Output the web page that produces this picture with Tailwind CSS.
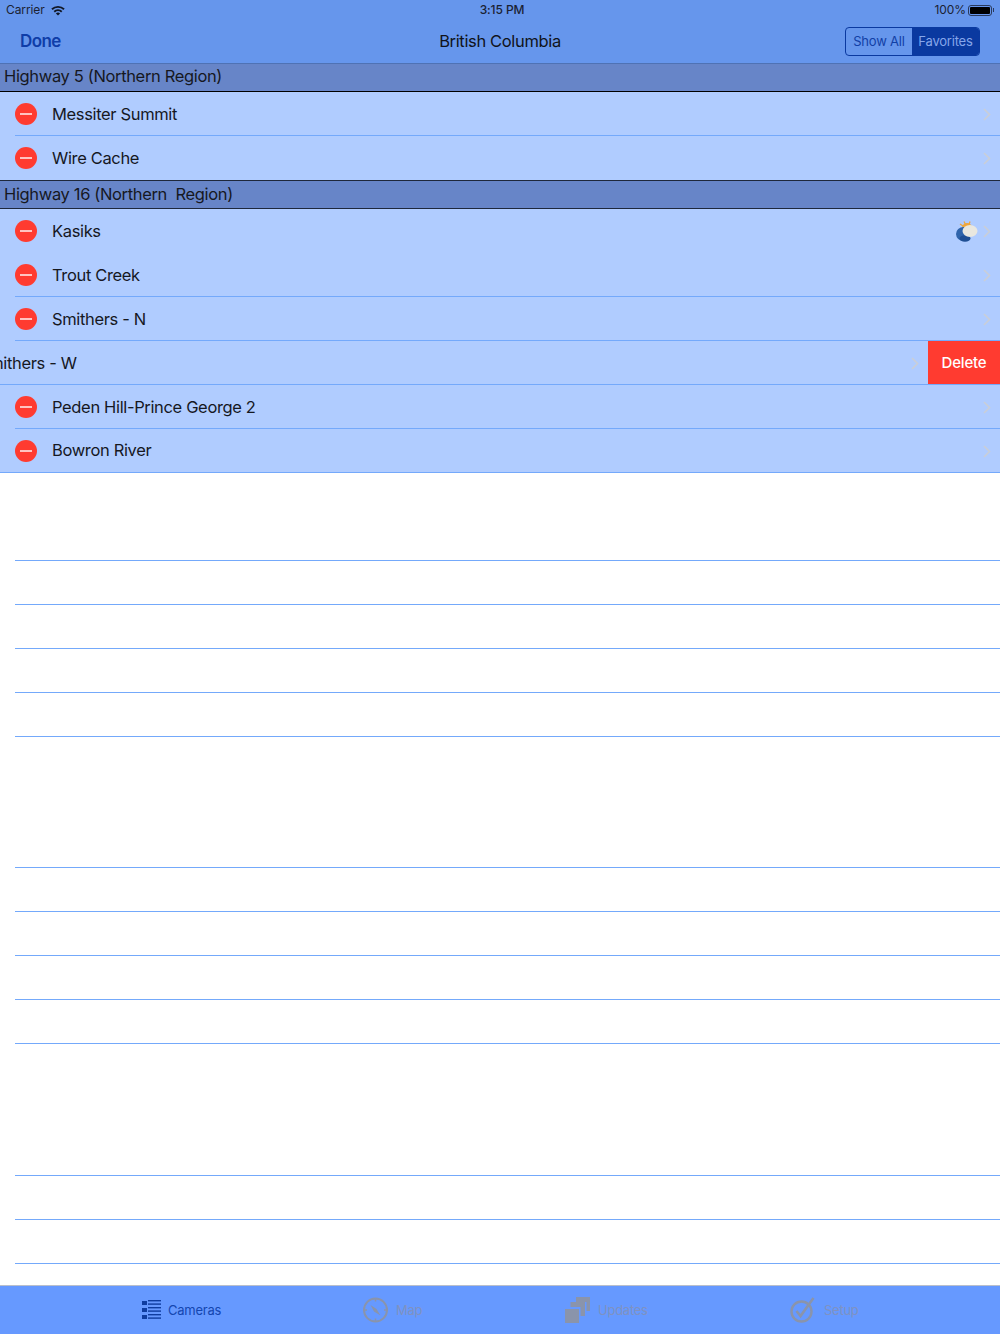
<!DOCTYPE html>
<html lang="en">
<head>
<meta charset="UTF-8">
<title>British Columbia</title>
<script src="https://cdn.jsdelivr.net/npm/@tailwindcss/browser@4"></script>
</head>
<body class="bg-white font-['Inter',sans-serif] text-[#16181f]">
<div class="relative flex h-[1334px] w-[1000px] flex-col overflow-hidden">

  <!-- status bar + nav -->
  <header class="h-[64px] shrink-0 border-b border-[#4f72b4] bg-[#6696ec]">
    <div class="flex h-[20px] items-center justify-between pl-[6px] pr-[6px] text-[12px] tracking-[-0.1px] text-[#1b2233]">
      <div class="flex w-[204px] items-center gap-[6px]">
        <span>Carrier</span>
        <svg width="14" height="11" viewBox="0 0 14 11"><path d="M0.3 3.6a9.7 9.7 0 0 1 13.4 0l-1.3 1.4a7.8 7.8 0 0 0-10.8 0zM2.6 6a6.4 6.4 0 0 1 8.8 0l-1.3 1.4a4.5 4.5 0 0 0-6.2 0zM4.9 8.4a3.1 3.1 0 0 1 4.2 0L7 10.6z" fill="#111827"/></svg>
      </div>
      <span class="font-medium">3:15 PM</span>
      <div class="flex w-[200px] items-center justify-end gap-[2px]">
        <span>100%</span>
        <div class="flex items-center">
          <div class="h-[11px] w-[24px] rounded-[3px] border border-[#2a3a5c] p-[1px]"><div class="h-full w-full rounded-[1px] bg-black"></div></div>
          <div class="ml-[1px] h-[4px] w-[1px] bg-[#2a3a5c]"></div>
        </div>
      </div>
    </div>
    <div class="flex h-[43px] items-center justify-between pl-[20px] pr-[20px]">
      <span class="w-[200px] text-[17px] font-semibold tracking-[-0.6px] text-[#0f3da8]">Done</span>
      <span class="text-[16.5px] tracking-[-0.35px] text-[#10131a]">British Columbia</span>
      <div class="flex w-[200px] justify-end">
        <div class="flex h-[29px] overflow-hidden rounded-[4px] border border-[#0a39a0] text-[13px] tracking-[-0.2px]">
          <span class="flex w-[66px] items-center justify-center text-[#123fa6]">Show All</span>
          <span class="flex w-[67px] items-center justify-center bg-[#0a39a0] text-[#86a6ea]">Favorites</span>
        </div>
      </div>
    </div>
  </header>

  <main class="flex-1 bg-white text-[16.5px] tracking-[-0.35px]">
    <div class="flex h-[28px] items-center border-b border-black bg-[#6785c8] pb-[2px] pl-[4px]">Highway 5 (Northern Region)</div>

    <div class="relative flex h-[44px] items-center bg-[#b0ccff] pl-[15px]">
      <span class="flex h-[22px] w-[22px] shrink-0 items-center justify-center rounded-full bg-[#ff3b30]"><span class="h-[2px] w-[12px] bg-[#ffc4c0]"></span></span>
      <span class="ml-[15px]">Messiter Summit</span>
      <svg class="absolute right-[9px] top-[16px]" width="8" height="13" viewBox="0 0 8 13"><path d="M1 1l5.5 5.5L1 12" fill="none" stroke="#c9ced8" stroke-width="1.7"/></svg>
      <div class="absolute bottom-0 left-[15px] right-0 h-[1px] bg-[#74a9fb]"></div>
    </div>
    <div class="relative flex h-[44px] items-center bg-[#b0ccff] pl-[15px]">
      <span class="flex h-[22px] w-[22px] shrink-0 items-center justify-center rounded-full bg-[#ff3b30]"><span class="h-[2px] w-[12px] bg-[#ffc4c0]"></span></span>
      <span class="ml-[15px]">Wire Cache</span>
      <svg class="absolute right-[9px] top-[16px]" width="8" height="13" viewBox="0 0 8 13"><path d="M1 1l5.5 5.5L1 12" fill="none" stroke="#c9ced8" stroke-width="1.7"/></svg>
    </div>

    <div class="flex h-[29px] items-center border-y border-y-black/70 bg-[#6785c8] pl-[4px]">Highway 16 (Northern&nbsp; Region)</div>

    <div class="relative flex h-[44px] items-center bg-[#b0ccff] pl-[15px]">
      <span class="flex h-[22px] w-[22px] shrink-0 items-center justify-center rounded-full bg-[#ff3b30]"><span class="h-[2px] w-[12px] bg-[#ffc4c0]"></span></span>
      <span class="ml-[15px]">Kasiks</span>
      <svg class="absolute left-[955px] top-[12px]" width="23" height="21" viewBox="0 0 23 21">
        <circle cx="12" cy="7" r="5" fill="#f0a63a"/>
        <path d="M9 .5l1.5 3M15 .5l-1 3M5 3l3 2" stroke="#f0a63a" stroke-width="1.3"/>
        <ellipse cx="8.5" cy="13" rx="7.5" ry="7" fill="#2f64ab"/>
        <ellipse cx="10" cy="17.5" rx="5.5" ry="3.2" fill="#1f4f94"/>
        <ellipse cx="15" cy="10" rx="7.5" ry="6" fill="#e9e7df"/>
      </svg>
      <svg class="absolute right-[9px] top-[16px]" width="8" height="13" viewBox="0 0 8 13"><path d="M1 1l5.5 5.5L1 12" fill="none" stroke="#c9ced8" stroke-width="1.7"/></svg>
    </div>
    <div class="relative flex h-[44px] items-center bg-[#b0ccff] pl-[15px]">
      <span class="flex h-[22px] w-[22px] shrink-0 items-center justify-center rounded-full bg-[#ff3b30]"><span class="h-[2px] w-[12px] bg-[#ffc4c0]"></span></span>
      <span class="ml-[15px]">Trout Creek</span>
      <svg class="absolute right-[9px] top-[16px]" width="8" height="13" viewBox="0 0 8 13"><path d="M1 1l5.5 5.5L1 12" fill="none" stroke="#c9ced8" stroke-width="1.7"/></svg>
      <div class="absolute bottom-0 left-[15px] right-0 h-[1px] bg-[#74a9fb]"></div>
    </div>
    <div class="relative flex h-[44px] items-center bg-[#b0ccff] pl-[15px]">
      <span class="flex h-[22px] w-[22px] shrink-0 items-center justify-center rounded-full bg-[#ff3b30]"><span class="h-[2px] w-[12px] bg-[#ffc4c0]"></span></span>
      <span class="ml-[15px]">Smithers - N</span>
      <svg class="absolute right-[9px] top-[16px]" width="8" height="13" viewBox="0 0 8 13"><path d="M1 1l5.5 5.5L1 12" fill="none" stroke="#c9ced8" stroke-width="1.7"/></svg>
      <div class="absolute bottom-0 left-[15px] right-0 h-[1px] bg-[#74a9fb]"></div>
    </div>

    <!-- row swiped open -->
    <div class="relative flex h-[44px] items-center overflow-hidden bg-[#b0ccff]">
      <span class="ml-[-21px] whitespace-nowrap">Smithers - W</span>
      <svg class="absolute right-[81px] top-[16px]" width="8" height="13" viewBox="0 0 8 13"><path d="M1 1l5.5 5.5L1 12" fill="none" stroke="#c9ced8" stroke-width="1.7"/></svg>
      <div class="absolute bottom-0 left-0 right-0 h-[1px] bg-[#74a9fb]"></div>
      <div class="absolute bottom-[1px] right-0 top-0 flex w-[72px] items-center justify-center bg-[#ff3b30] pt-[2px] text-[15px] font-medium tracking-[-0.2px] text-white">Delete</div>
    </div>

    <div class="relative flex h-[44px] items-center bg-[#b0ccff] pl-[15px]">
      <span class="flex h-[22px] w-[22px] shrink-0 items-center justify-center rounded-full bg-[#ff3b30]"><span class="h-[2px] w-[12px] bg-[#ffc4c0]"></span></span>
      <span class="ml-[15px]">Peden Hill-Prince George 2</span>
      <svg class="absolute right-[9px] top-[16px]" width="8" height="13" viewBox="0 0 8 13"><path d="M1 1l5.5 5.5L1 12" fill="none" stroke="#c9ced8" stroke-width="1.7"/></svg>
      <div class="absolute bottom-0 left-[15px] right-0 h-[1px] bg-[#74a9fb]"></div>
    </div>
    <div class="relative flex h-[44px] items-center border-b border-[#74a9fb] bg-[#b0ccff] pl-[15px]">
      <span class="flex h-[22px] w-[22px] shrink-0 items-center justify-center rounded-full bg-[#ff3b30]"><span class="h-[2px] w-[12px] bg-[#ffc4c0]"></span></span>
      <span class="ml-[15px]">Bowron River</span>
      <svg class="absolute right-[9px] top-[16px]" width="8" height="13" viewBox="0 0 8 13"><path d="M1 1l5.5 5.5L1 12" fill="none" stroke="#c9ced8" stroke-width="1.7"/></svg>
    </div>

    <!-- empty table lines -->
    <div class="ml-[15px] mt-[87px] flex flex-col gap-[43px]">
      <div class="h-[1px] bg-[#74a9fb]"></div>
      <div class="h-[1px] bg-[#74a9fb]"></div>
      <div class="h-[1px] bg-[#74a9fb]"></div>
      <div class="h-[1px] bg-[#74a9fb]"></div>
      <div class="h-[1px] bg-[#74a9fb]"></div>
    </div>
    <div class="ml-[15px] mt-[130px] flex flex-col gap-[43px]">
      <div class="h-[1px] bg-[#74a9fb]"></div>
      <div class="h-[1px] bg-[#74a9fb]"></div>
      <div class="h-[1px] bg-[#74a9fb]"></div>
      <div class="h-[1px] bg-[#74a9fb]"></div>
      <div class="h-[1px] bg-[#74a9fb]"></div>
    </div>
    <div class="ml-[15px] mt-[131px] flex flex-col gap-[43px]">
      <div class="h-[1px] bg-[#74a9fb]"></div>
      <div class="h-[1px] bg-[#74a9fb]"></div>
      <div class="h-[1px] bg-[#74a9fb]"></div>
    </div>
  </main>

  <!-- tab bar -->
  <footer class="flex h-[49px] shrink-0 items-center border-t border-[#b9bfcb] bg-[#6699ff] pl-[142px] text-[13px] tracking-[-0.25px] text-[#7f92c2]">
    <div class="flex w-[221px] items-center gap-[7px] text-[#1446b0]">
      <svg width="19" height="22" viewBox="0 0 19 22" fill="#0f3da0">
        <rect x="0" y="2" width="5" height="4"/><rect x="0" y="9" width="5" height="4"/><rect x="0" y="16" width="5" height="4"/>
        <rect x="6" y="1" width="13" height="1.4"/><rect x="6" y="4.4" width="13" height="1.4"/><rect x="6" y="8" width="13" height="1.4"/><rect x="6" y="11.4" width="13" height="1.4"/><rect x="6" y="15" width="13" height="1.4"/><rect x="6" y="18.4" width="13" height="1.4"/>
      </svg>
      <span class="pt-[2px]">Cameras</span>
    </div>
    <div class="flex w-[202px] items-center gap-[8px]">
      <svg width="25" height="26" viewBox="0 0 25 26" fill="none" stroke="#8a94ab">
        <circle cx="12.5" cy="13" r="11.5" stroke-width="2"/>
        <path d="M12.5 1.5v3M12.5 21.5v3M1 13h3M21 13h3" stroke-width="1.5"/>
        <path d="M7.5 8l3.5 6.5 6.5 4-4-6.5z" fill="#8a94ab" stroke="none"/>
      </svg>
      <span class="pt-[2px]">Map</span>
    </div>
    <div class="flex w-[225px] items-center gap-[8px]">
      <svg width="25" height="26" viewBox="0 0 25 26" fill="#8a94ab">
        <path d="M11 0h14v14h-3.5V5H11z"/>
        <path d="M5.5 5h14.500v14h-4.500V10H5.500z"/>
        <rect x="0" y="12" width="14" height="14"/>
      </svg>
      <span class="pt-[2px]">Updates</span>
    </div>
    <div class="flex items-center gap-[9px]">
      <svg width="25" height="26" viewBox="0 0 25 26" fill="none" stroke="#8a94ab">
        <circle cx="11.5" cy="14.5" r="10" stroke-width="2.4"/>
        <path d="M6.5 14l4 5L23.5 1" stroke-width="2.6"/>
      </svg>
      <span class="pt-[2px]">Setup</span>
    </div>
  </footer>
</div>
</body>
</html>
